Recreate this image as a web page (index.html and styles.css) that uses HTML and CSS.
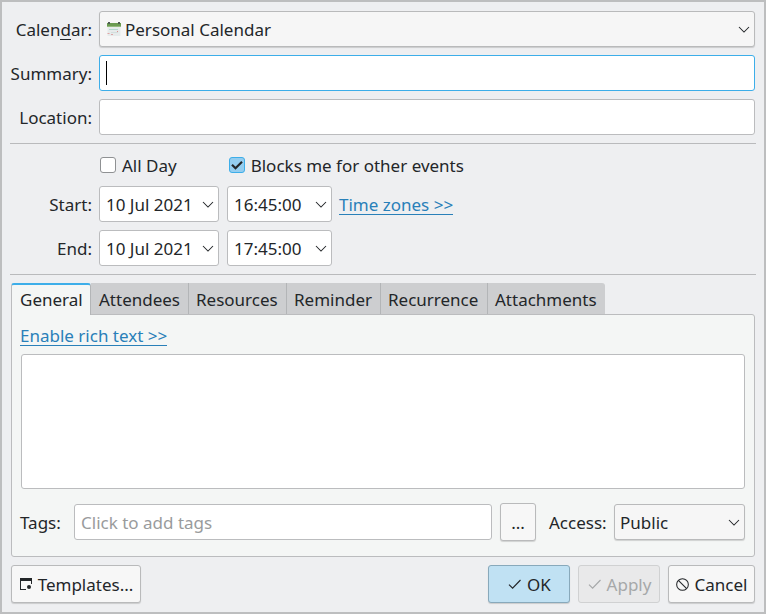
FILE: index.html
```html
<!DOCTYPE html>
<html lang="en">
<head>
<meta charset="utf-8">
<title>New Event</title>
<link rel="stylesheet" href="styles.css">
</head>
<body>
<svg class="defs" width="0" height="0">
  <symbol id="chevron" viewBox="0 0 12 7"><path d="M1 1l5 5 5-5" fill="none" stroke="currentColor" stroke-width="1.05"/></symbol>
  <symbol id="check" viewBox="0 0 14 12"><path d="M1 6.6l3.6 3.6L12.5 2" fill="none" stroke="currentColor" stroke-width="1.15"/></symbol>
</svg>
<main class="window">
  <section class="form">
    <label class="label">Calen<span class="mnemonic">d</span>ar:</label>
    <div class="field combo">
      <svg class="cal-icon" viewBox="0 0 14 14">
        <rect x="0.5" y="1" width="13" height="13" fill="#e6ebeb"/>
        <rect x="0" y="1" width="14" height="4" fill="#6b9b52"/>
        <rect x="0" y="4" width="14" height="1" fill="#93b97d"/>
        <rect x="1" y="0" width="2" height="2" fill="#4c5a52"/><rect x="11" y="0" width="2" height="2" fill="#4c5a52"/>
        <rect x="2" y="7" width="9" height="1" fill="#b5d8cf"/>
        <rect x="4" y="10" width="7" height="1" fill="#d3dedd"/>
        <rect x="0.5" y="11" width="2" height="1" fill="#e3a3a3"/><rect x="4" y="12" width="2" height="1" fill="#dba7a7"/><rect x="10" y="9" width="1" height="1" fill="#db8d8d"/>
      </svg>
      <span class="grow">Personal Calendar</span>
      <svg class="chevron"><use href="#chevron"/></svg>
    </div>
    <label class="label">Summary:</label>
    <div class="field focus"><span class="caret"></span></div>
    <label class="label">Location:</label>
    <div class="field"></div>
  </section>
  <hr>
  <section class="form times">
    <div class="checks">
      <span class="check"><span class="box"></span><span class="check-text">All Day</span></span>
      <span class="check"><span class="box on"><svg viewBox="0 0 16 16"><path d="M3 7.7l3.5 3.5L13 4.7" fill="none" stroke="#232629" stroke-width="2.2"/></svg></span><span class="check-text">Blocks me for other events</span></span>
    </div>
    <label class="label">Start:</label>
    <div class="row">
      <div class="field date"><span class="grow">10 Jul 2021</span><svg class="chevron"><use href="#chevron"/></svg></div>
      <div class="field time"><span class="grow">16:45:00</span><svg class="chevron"><use href="#chevron"/></svg></div>
      <a class="link">Time zones &gt;&gt;</a>
    </div>
    <label class="label">End:</label>
    <div class="row">
      <div class="field date"><span class="grow">10 Jul 2021</span><svg class="chevron"><use href="#chevron"/></svg></div>
      <div class="field time"><span class="grow">17:45:00</span><svg class="chevron"><use href="#chevron"/></svg></div>
    </div>
  </section>
  <hr>
  <nav class="tabs">
    <span class="tab active t1">General</span><span class="tab t2">Attendees</span><span class="tab t3">Resources</span><span class="tab t4">Reminder</span><span class="tab t5">Recurrence</span><span class="tab t6">Attachments</span>
  </nav>
  <section class="pane">
    <a class="link">Enable rich text &gt;&gt;</a>
    <div class="textarea"></div>
    <div class="tags">
      <span class="tags-label">Tags:</span>
      <div class="field tag-input"><span class="grow">Click to add tags</span></div>
      <div class="button more"><span>...</span></div>
      <span class="access-label">Access:</span>
      <div class="field combo access"><span class="grow">Public</span><svg class="chevron"><use href="#chevron"/></svg></div>
    </div>
  </section>
  <footer class="buttons">
    <div class="button templates"><svg class="tpl-icon" viewBox="0 0 12 12"><path d="M0 0h12v6h-1V3H1v8h5v1H0z" fill="#232629"/><circle cx="9" cy="9" r="2" fill="#232629"/></svg><span>Templates...</span></div>
    <div class="button ok"><svg class="tick"><use href="#check"/></svg><span>OK</span></div>
    <div class="button apply"><svg class="tick"><use href="#check"/></svg><span>Apply</span></div>
    <div class="button cancel"><svg class="no-icon" viewBox="0 0 12 12"><g fill="none" stroke="#232629" stroke-width="0.95"><circle cx="6" cy="6" r="5.4"/><path d="M2.2 2.2l7.6 7.6"/></g></svg><span>Cancel</span></div>
  </footer>
</main>
</body>
</html>
```
FILE: styles.css
```css
* { box-sizing: border-box; }
body { margin: 0; background: #eeeff1; color: #232629; font: 17px/24px "Noto Sans", sans-serif; }
.defs { display: block; }
.window { width: 766px; height: 614px; padding: 9px 8px 0 8px; border: 2px solid #bdbebf; overflow: hidden; white-space: nowrap; }
.form { display: grid; grid-template-columns: 82px 656px; column-gap: 7px; row-gap: 8px; align-items: center; }
.label { text-align: right; padding-top: 2px; }
.mnemonic { box-shadow: 0 -1px #232629 inset; display: inline-block; height: 22px; }
.field { height: 36px; background: #fff; border: 1px solid #bbbcbe; border-radius: 3px; display: flex; align-items: center; padding: 0 4px 0 6px; }
.combo { background: #f6f6f6; border-color: #b9babb; box-shadow: 0 1px 1px #00000026; padding-left: 7px; }
.focus { border-color: #3daee9; }
.grow { flex: 1; padding-top: 2px; }
.caret { width: 1px; height: 24px; background: #000; }
.cal-icon { width: 14px; height: 14px; margin-right: 4px; }
.chevron { width: 12px; height: 7px; flex: none; }
hr { border: 0; height: 1px; background: #b9babc; margin: 8px 0; }
.checks { grid-column: 2; height: 26px; display: flex; gap: 52px; padding-left: 1px; }
.check { display: flex; align-items: center; gap: 6px; height: 26px; }
.check-text { padding-top: 1px; }
.box { width: 16px; height: 16px; border: 1px solid #8f9193; border-radius: 3px; background: #fff; }
.on { background: #94cdef; border-color: #3daee9; }
.on svg { display: block; width: 16px; height: 16px; margin: -1px; }
.row { display: flex; gap: 8px; align-items: center; }
.date { width: 120px; }
.time { width: 105px; }
.link { display: block; width: fit-content; height: 21px; color: #2980b9; border-bottom: 1px solid #2980b9; padding-top: 2px; line-height: 18px; }
.row .link { margin-left: -1px; }
.tabs { display: flex; height: 31px; padding-left: 1px; }
.tab { height: 31px; background: #cdced0; border-right: 1px solid #b3b5b7; padding-left: 7px; line-height: 34px; }
.active { background: #f4f6f5; border-left: 1px solid #bbbcbe; border-top: 2px solid #3daee9; border-radius: 3px 3px 0 0; line-height: 30px; height: 32px; position: relative; }
.t1 { width: 80px; padding-left: 8px; } .t2 { width: 98px; padding-left: 8px; } .t3 { width: 98px; } .t4 { width: 94px; } .t5 { width: 107px; }
.t6 { width: 117px; border-right: 0; border-radius: 0 3px 0 0; }
.pane { margin: 0 1px; height: 243px; background: #f4f6f5; border: 1px solid #bbbcbe; border-radius: 0 3px 3px 3px; padding: 10px 9px 0 8px; }
.textarea { height: 135px; background: #fff; border: 1px solid #bbbcbe; border-radius: 3px; margin: 8px 0 0 1px; }
.tags { display: flex; align-items: center; margin-top: 14px; }
.tags-label { width: 54px; padding-top: 2px; }
.tag-input { width: 418px; color: #999b9c; }
.button { height: 38px; display: flex; align-items: center; justify-content: center; background: #f7f7f7; border: 1px solid #b9babb; border-radius: 3px; box-shadow: 0 1px 1px #00000026; }
.button span { padding-top: 2px; }
.more { width: 36px; margin-left: 8px; }
.access-label { margin-left: 13px; width: 65px; padding-top: 2px; }
.access { width: 131px; padding-left: 5px; }
.buttons { display: flex; margin: 8px 1px 0; gap: 8px; }
.templates { width: 130px; margin-right: auto; padding-left: 1px; }
.tpl-icon { width: 12px; height: 12px; margin-right: 6px; }
.tick { width: 14px; height: 12px; margin-right: 5px; }
.ok { width: 82px; background: #c0e1f3; border-color: #88a9bb; padding-left: 1px; }
.apply { width: 82px; background: #e9e9ea; border-color: #d0d1d2; color: #a6a8a9; box-shadow: none; padding-left: 1px; }
.cancel { width: 87px; }
.no-icon { width: 13px; height: 13px; margin-right: 6px; }
```
